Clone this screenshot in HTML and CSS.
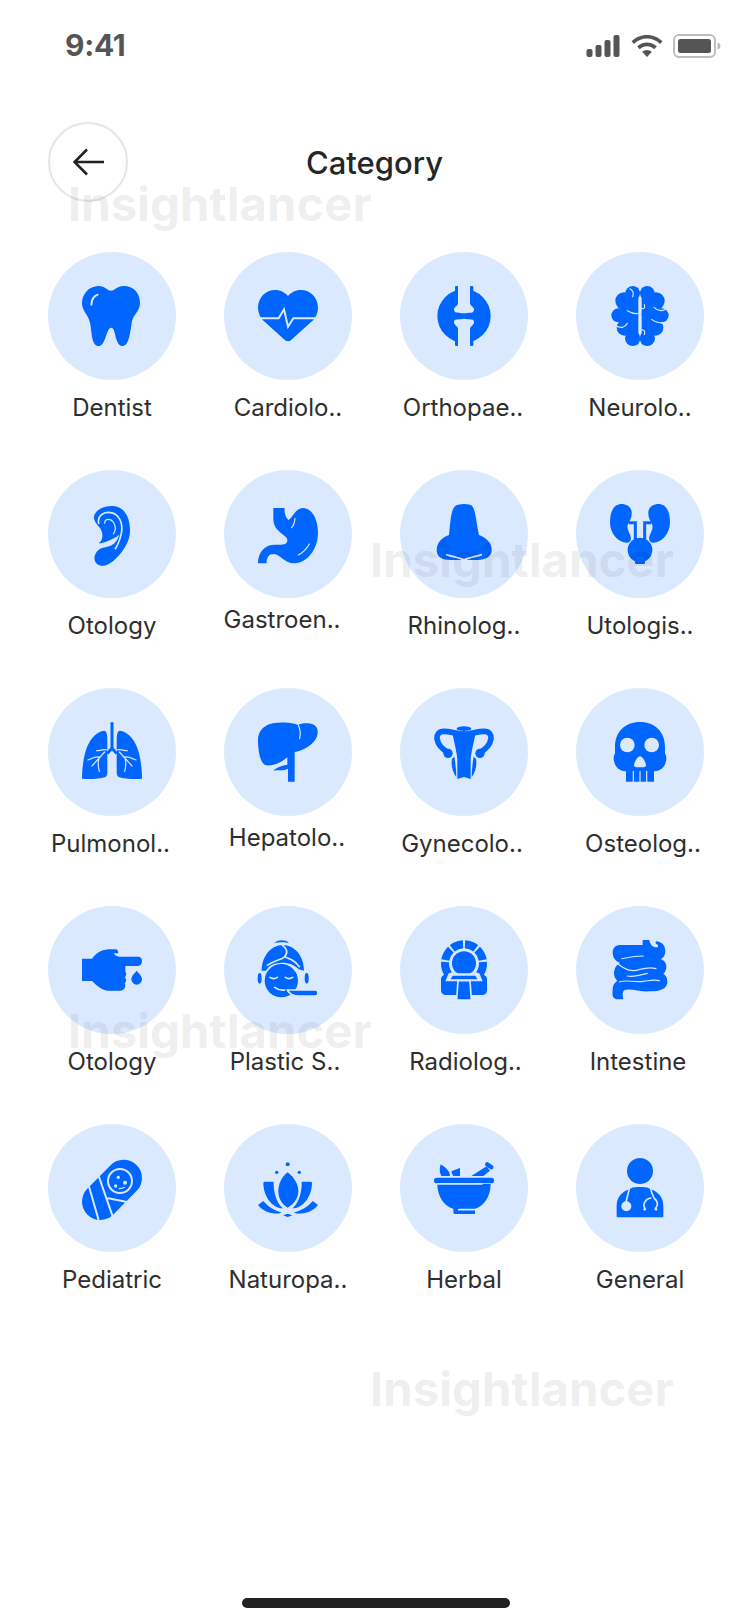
FILE: index.html
```html
<!DOCTYPE html>
<html lang="en">
<head>
<meta charset="utf-8">
<title>Category</title>
<link rel="stylesheet" href="styles.css">
</head>
<body>
<div class="phone">
  <div class="status">
    <span class="time">9:41</span>
    <div class="status-icons">
      <svg class="sig" viewBox="0 0 34 22"><rect x="0" y="14" width="6" height="8" rx="2"/><rect x="9" y="10" width="6" height="12" rx="2"/><rect x="18" y="5" width="6" height="17" rx="2"/><rect x="27" y="0" width="6" height="22" rx="2"/></svg>
      <svg class="wifi" viewBox="0 0 32 22"><path d="M16 0C10 0 4.500 2.300 0.500 6.300L3 9C6.500 5.500 11 3.600 16 3.600S25.500 5.500 29 9L31.500 6.300C27.500 2.300 22 0 16 0Z"/><path d="M16 7.500C12.300 7.500 8.800 9 6.200 11.500L8.800 14.200C10.700 12.300 13.200 11.200 16 11.200S21.300 12.300 23.200 14.200L25.800 11.500C23.200 9 19.700 7.500 16 7.500Z"/><path d="M16 15C14.200 15 12.500 15.700 11.300 16.900L16 22L20.700 16.900C19.500 15.700 17.800 15 16 15Z"/></svg>
      <svg class="batt" viewBox="0 0 48 24"><rect class="batt-out" x="1" y="1" width="41" height="22" rx="5"/><rect x="5" y="5" width="33" height="14" rx="2.500"/><path class="batt-nub" d="M44.500 8.500C46.500 9 47.500 10.500 47.500 12S46.500 15 44.500 15.500Z"/></svg>
    </div>
  </div>

  <header class="head">
    <button class="back" type="button" aria-label="Back">
      <svg viewBox="0 0 32 32"><path d="M31 16H2M14 3.500L1.500 16L14 28.500"/></svg>
    </button>
    <h1 class="title">Category</h1>
  </header>

  <main class="grid">
    <div class="cell"><div class="disc"><svg class="ico" viewBox="0 0 180 180"><path d="M50 0C20 0 0 25 0 52C0 75 18 85 24 110C30 140 28 180 50 180C72 180 72 125 88 125C102 125 98 180 122 180C142 180 145 135 150 105C155 85 174 75 174 50C174 22 155 0 125 0C105 0 98 14 87 14C75 14 70 0 50 0Z"/><path class="lt" d="M47 26C36 30 29 40 28 56"/></svg></div><span class="lbl">Dentist</span></div>

    <div class="cell"><div class="disc"><svg class="ico" viewBox="0 0 180 180"><path d="M52 12C22 12 0 35 0 65C0 80 6 92 14 102L78 160C85 168 95 168 102 160L166 102C174 92 180 80 180 65C180 35 158 12 128 12C112 12 98 20 90 30C82 20 68 12 52 12Z"/><path class="lt" d="M3 97H62L78 70L90 122L106 97H177"/></svg></div><span class="lbl">Cardiolo..</span></div>

    <div class="cell"><div class="disc"><svg class="ico" viewBox="0 0 180 180"><circle cx="90" cy="90" r="80"/><rect x="63" y="0" width="10" height="180" rx="3"/><rect x="108" y="0" width="10" height="180" rx="3"/><path class="lf" d="M72 -2H108V50C108 60 120 62 120 71C120 83 104 79 90 82C76 79 60 83 60 71C60 62 72 60 72 50Z"/><path class="lf" d="M72 182H108V130C108 120 120 118 120 108C120 96 104 102 90 98C76 102 60 96 60 108C60 118 72 120 72 130Z"/></svg></div><span class="lbl lbl-s1">Orthopae..</span></div>

    <div class="cell"><div class="disc"><svg class="ico" viewBox="0 0 180 180"><circle cx="68" cy="22" r="22"/><circle cx="42" cy="45" r="26"/><circle cx="25" cy="88" r="21"/><circle cx="44" cy="125" r="24"/><circle cx="68" cy="157" r="23"/><circle cx="54" cy="85" r="31"/><rect x="58" y="5" width="27" height="170"/><circle cx="112" cy="22" r="22"/><circle cx="138" cy="45" r="26"/><circle cx="155" cy="88" r="21"/><circle cx="136" cy="125" r="24"/><circle cx="112" cy="157" r="23"/><circle cx="126" cy="85" r="31"/><rect x="95" y="5" width="27" height="170"/><path class="lt hair" d="M60 8C70 14 72 22 68 32M16 118C30 128 44 126 52 112M52 74C62 80 72 86 85 82M95 68C103 70 106 62 103 56M168 68C155 78 142 74 132 64M165 112C150 110 135 110 125 100M95 132C103 130 106 138 103 146"/></svg></div><span class="lbl">Neurolo..</span></div>

    <div class="cell"><div class="disc"><svg class="ico" viewBox="0 0 180 180"><path d="M90 6C122 6 144 32 144 80C144 112 125 140 100 165C84 182 60 192 45 180C30 168 38 140 60 132C80 126 100 128 112 92C90 108 65 118 50 118C62 108 66 92 54 72C42 58 34 48 36 36C42 16 65 6 90 6Z"/><path class="lt thin" d="M50 58C46 36 64 22 86 26C112 30 124 58 118 88C114 106 108 122 100 134"/><path class="lt hair" d="M68 58C68 42 88 42 96 58C102 70 100 82 94 90"/></svg></div><span class="lbl">Otology</span></div>

    <div class="cell"><div class="disc"><svg class="ico" viewBox="0 0 180 180"><path d="M46 12H80C78 28 84 42 92 48C105 40 112 12 136 12C165 14 180 50 180 85C180 140 145 178 108 178C80 178 68 152 48 150C32 150 26 160 26 178H0C0 145 20 122 50 122C70 122 88 125 88 108C88 92 46 85 46 45Z"/><path class="lt hair" d="M111 43C110 55 107 64 101 71M154 120C146 134 135 146 121 153"/></svg></div><span class="lbl lbl-up lbl-left">Gastroen..</span></div>

    <div class="cell"><div class="disc"><svg class="ico" viewBox="0 0 180 180"><path d="M72 2C50 5 50 50 45 93C25 100 8 115 8 138C8 160 25 168 50 168H130C155 168 173 158 173 138C173 115 155 100 135 93C125 50 125 5 108 2Q90 -2 72 2Z"/><path class="lt thin" d="M38 152C55 158 75 160 90 168M142 152C125 158 105 160 90 168"/></svg></div><span class="lbl">Rhinolog..</span></div>

    <div class="cell"><div class="disc"><svg class="ico" viewBox="0 0 180 180"><path d="M35 0C10 0 0 25 0 55C0 90 25 116 50 116C62 116 66 105 60 92C54 80 50 70 54 60C60 48 66 40 65 25C65 10 50 0 35 0Z"/><path d="M145 0C170 0 180 25 180 55C180 90 155 116 130 116C118 116 114 105 120 92C126 80 130 70 126 60C120 48 114 40 115 25C115 10 130 0 145 0Z"/><path class="st" d="M56 56H76V112M124 56H104V112"/><circle cx="90" cy="138" r="37"/><rect x="75" y="160" width="30" height="20" rx="3"/></svg></div><span class="lbl">Utologis..</span></div>

    <div class="cell"><div class="disc"><svg class="ico" viewBox="0 0 180 180"><path d="M66 26C40 30 20 55 10 90C2 120 0 150 0 170C20 172 50 172 70 165C76 162 76 155 76 145V60C76 40 75 26 66 26Z"/><path d="M114 26C140 30 160 55 170 90C178 120 180 150 180 170C160 172 130 172 110 165C104 162 104 155 104 145V60C104 40 105 26 114 26Z"/><path class="st" d="M90 1V78L76 95M90 78L104 95"/><path class="lt hair" d="M76 84C66 80 56 86 44 86M68 90L30 132M56 104C42 104 30 108 18 114M52 108C46 118 48 132 52 148"/><path class="lt hair" d="M104 84C114 80 124 86 136 86M112 90L150 132M124 104C138 104 150 108 162 114M128 108C134 118 132 132 128 148"/></svg></div><span class="lbl lbl-shift">Pulmonol..</span></div>

    <div class="cell"><div class="disc"><svg class="ico" viewBox="0 0 180 180"><path d="M0 55C0 18 30 2 62 2C85 0 108 2 120 9C130 2 155 2 167 8C180 14 182 30 176 46C165 68 140 86 110 90V179H90V140C75 148 62 142 46 146C55 136 75 130 88 128V106C70 122 45 132 25 130C8 128 0 90 0 55Z"/><path class="lt hair" d="M121 9C127 22 128 36 125 50"/></svg></div><span class="lbl lbl-up lbl-s1">Hepatolo..</span></div>

    <div class="cell"><div class="disc"><svg class="ico" viewBox="0 0 180 180"><ellipse cx="90" cy="20" rx="22" ry="7"/><g id="ut"><path class="tube" d="M90 36C70 36 50 28 30 28C14 28 8 38 9 50C12 70 28 84 44 92"/><circle cx="42" cy="94" r="14"/><path d="M54 110C50 130 56 150 67 166C67 146 65 126 61 104Z"/><path class="lt hair" d="M30 46C42 46 50 56 50 72"/></g><use href="#ut" transform="matrix(-1 0 0 1 180 0)"/><path d="M56 38H124C118 66 111 94 110 112V171L90 165L70 171V112C69 94 62 66 56 38Z"/></svg></div><span class="lbl lbl-s2">Gynecolo..</span></div>

    <div class="cell"><div class="disc"><svg class="ico" viewBox="0 0 180 180"><path d="M90 0C45 0 15 30 15 75V95C5 105 12 148 48 148V179H132V148C168 148 175 105 165 95V75C165 30 135 0 90 0Z"/><circle class="lf" cx="52" cy="69" r="22"/><circle class="lf" cx="125" cy="69" r="22"/><path class="lf" d="M90 103C98 103 108 122 108 130C108 136 102 136 90 136C78 136 72 136 72 130C72 122 82 103 90 103Z"/><path class="lt hair" d="M70 148V180M90 148V180M110 148V180"/></svg></div><span class="lbl lbl-right">Osteolog..</span></div>

    <div class="cell"><div class="disc"><svg class="ico" viewBox="0 0 180 180"><path d="M0 56H30C45 35 65 28 85 28H100C108 28 110 36 108 40H95C100 48 108 50 115 50H168C178 50 180 58 180 64C180 72 175 78 168 78H130V95C135 100 132 110 128 112C135 118 132 128 128 130C133 138 128 152 115 152H80C60 152 42 135 30 123H0Z"/><path d="M164 92C172 102 180 108 180 118A16 16 0 0 1 148 118C148 108 156 102 164 92Z"/></svg></div><span class="lbl">Otology</span></div>

    <div class="cell"><div class="disc"><svg class="ico" viewBox="0 0 180 180"><path d="M50 10C55 -2 88 -2 93 10C82 6 62 6 50 10Z"/><path d="M74 15C112 15 138 50 138 92L122 88C110 74 92 68 72 68C50 68 32 76 24 92L11 92C11 50 38 15 74 15Z"/><ellipse cx="5" cy="115" rx="6" ry="16"/><ellipse cx="146" cy="115" rx="6" ry="16"/><circle cx="70" cy="122" r="50"/><path class="tray" d="M88 150H172C177 150 180 154 180 159C180 165 177 168 172 168H120C108 168 96 165 88 150Z"/><path class="lt thin" d="M72 14C86 26 92 36 80 50C74 58 50 60 28 76M80 50C96 56 112 62 124 80"/><path class="lt thin" d="M36 112C42 116 52 116 58 112M82 112C88 116 98 116 104 112M50 142C58 148 68 152 80 150"/></svg></div><span class="lbl lbl-s3">Plastic S..</span></div>

    <div class="cell"><div class="disc"><svg class="ico" viewBox="0 0 180 180"><path class="ring" d="M93 13.100A57 57 0 0 1 125.100 25.100M129.600 29A57 57 0 0 1 146.100 60.100M146.900 66A57 57 0 0 1 136.700 102.700M87 13.100A57 57 0 0 0 54.900 25.100M50.400 29A57 57 0 0 0 33.900 60.100M33.100 66A57 57 0 0 0 43.300 102.700"/><circle cx="90" cy="70" r="36"/><rect x="21" y="104" width="138" height="61" rx="14"/><path class="lf" d="M44 100H136L146 124H34Z"/><path d="M56 107H124L130 118H50Z"/><path class="tray" d="M72 122H108L112 180H68Z"/></svg></div><span class="lbl lbl-r">Radiolog..</span></div>

    <div class="cell"><div class="disc"><svg class="ico" viewBox="0 0 180 180"><path d="M32 15H98V0H118C120 14 128 22 140 22C146 22 146 14 138 12C136 8 136 4 140 4C156 6 166 16 166 34C166 46 160 54 152 58C166 62 172 74 168 88C166 94 164 98 160 102C172 108 172 122 172 128C170 146 150 154 120 154C90 156 62 144 44 150C36 154 38 168 40 178H24C8 178 6 166 8 150C8 136 12 130 22 122C12 114 10 100 14 88C16 80 22 74 30 68C14 62 8 50 8 38C8 22 18 15 32 15Z"/><path class="lt hair" d="M36 56C56 52 72 48 100 48M24 72C50 92 66 96 90 88C105 84 120 80 138 86M52 108C72 112 90 106 112 100M28 126C50 118 70 128 100 124C118 122 130 118 148 122"/></svg></div><span class="lbl lbl-s2">Intestine</span></div>

    <div class="cell"><div class="disc"><svg class="ico" viewBox="0 0 180 180"><path class="swad" d="M55 131L125 60"/><path class="lt" d="M19 79L49 183M49 51L94 181M79 121L139 133M92 181L134 134"/><circle class="ring-head" cx="114" cy="69" r="36"/><circle class="lf" cx="109" cy="58" r="5"/><circle class="lf" cx="129" cy="74" r="6"/><circle class="lf" cx="101" cy="84" r="5"/><path class="lt hair" d="M112 92C120 92 124 90 128 88"/></svg></div><span class="lbl">Pediatric</span></div>

    <div class="cell"><div class="disc"><svg class="ico" viewBox="0 0 180 180"><circle cx="89" cy="19" r="6"/><circle cx="56" cy="43" r="5"/><circle cx="124" cy="43" r="5"/><path d="M89 43C108 58 121 78 121 100C121 122 106 140 89 149C72 140 61 122 61 100C61 78 70 58 89 43Z"/><path d="M20 71H47C46 95 52 130 74 151C40 150 16 112 16 75C16 73 18 71 20 71Z"/><path d="M158 71H131C132 95 126 130 104 151C138 150 162 112 162 75C162 73 160 71 158 71Z"/><path d="M0 141L16 129C30 146 50 158 71 164C40 172 15 160 0 141Z"/><path d="M180 141L164 129C150 146 130 158 107 164C140 172 165 160 180 141Z"/><path d="M89 167L103 172L89 177L75 172Z"/></svg></div><span class="lbl">Naturopa..</span></div>

    <div class="cell"><div class="disc"><svg class="ico" viewBox="0 0 180 180"><path d="M20 19C35 28 48 40 48 54H22C16 45 16 30 20 19Z"/><path d="M52 40L78 30V54H58C55 50 53 45 52 40Z"/><path d="M112 54L158 25L168 38L148 54Z"/><rect x="152" y="17" width="28" height="13" rx="6" transform="rotate(35 166 23)"/><rect x="0" y="59" width="180" height="17" rx="8"/><path d="M10 78H170C170 115 150 145 123 152V168H62C58 168 58 162 58 152C30 145 10 115 10 78Z"/><path class="lt thin" d="M12 78H144M74 155H122"/></svg></div><span class="lbl">Herbal</span></div>

    <div class="cell"><div class="disc"><svg class="ico" viewBox="0 0 180 180"><circle cx="90" cy="39" r="39"/><path d="M20 178V145C20 118 34 104 52 96L65 90C70 86 110 86 115 90L128 96C146 104 160 118 160 145V178Z"/><path class="lt thin" d="M58 92L48 132M122 92C124 102 128 112 132 120C144 130 146 142 136 152M105 152C96 138 108 122 122 120"/><circle class="lf" cx="49" cy="145" r="15"/><circle class="lf" cx="104" cy="154" r="4"/><circle class="lf" cx="138" cy="154" r="4"/></svg></div><span class="lbl">General</span></div>
  </main>

  <div class="home"></div>

  <span class="mark mark-a">Insightlancer</span>
  <span class="mark mark-b">Insightlancer</span>
  <span class="mark mark-c">Insightlancer</span>
  <span class="mark mark-d">Insightlancer</span>
</div>
</body>
</html>
```

FILE: styles.css
```css
* { box-sizing: border-box; }
html, body { margin: 0; padding: 0; background: #fff; }
body { font-family: Inter, "Noto Sans", sans-serif; }

.phone {
  position: relative;
  width: 750px;
  height: 1624px;
  overflow: hidden;
  background: #fff;
  display: flex;
  flex-direction: column;
}

.status {
  height: 122px;
  padding: 26px 29px 0 65px;
  display: flex;
  justify-content: space-between;
  align-items: flex-start;
}
.time {
  font-size: 30px;
  font-weight: 700;
  letter-spacing: -0.3px;
  line-height: 38px;
  color: #555;
}
.status-icons { display: flex; align-items: flex-start; gap: 10px; padding-top: 8px; }
.status-icons svg { display: block; fill: #555; }
.sig { width: 35px; height: 22px; margin-top: 1px; }
.wifi { width: 32px; height: 22px; margin-top: 1px; }
.batt { width: 48px; height: 24px; }
.batt-out { fill: none; stroke: #bdbdbd; stroke-width: 2; }
.batt-nub { fill: #bdbdbd; }

.head {
  height: 80px;
  margin: 0 46px 50px 48px;
  display: flex;
  align-items: center;
}
.back {
  width: 80px;
  height: 80px;
  padding: 0 0 0 1px;
  border: 2px solid #e6e6e6;
  border-radius: 50%;
  background: transparent;
  display: flex;
  align-items: center;
  justify-content: center;
  flex: none;
}
.back svg { width: 32px; height: 32px; fill: none; stroke: #222; stroke-width: 2.600; }
.title {
  margin: 2px 0 0 178px;
  font-size: 31px;
  font-weight: 500;
  line-height: 40px;
  color: #262626;
}

.grid {
  display: grid;
  grid-template-columns: repeat(4, 128px);
  column-gap: 48px;
  grid-auto-rows: 218px;
  padding-left: 48px;
}
.cell { display: flex; flex-direction: column; align-items: center; }
.disc {
  width: 128px;
  height: 128px;
  flex: none;
  border-radius: 50%;
  background: #dbe9ff;
  display: flex;
  align-items: center;
  justify-content: center;
}
.ico { width: 60px; height: 60px; overflow: visible; fill: #0066ff; }
.lf { fill: #dbe9ff; }
.lt { fill: none; stroke: #dbe9ff; stroke-width: 6; stroke-linecap: round; }
.lt.thin { stroke-width: 5; }
.lt.hair { stroke-width: 3.500; }
.st { fill: none; stroke: #0066ff; stroke-width: 9; }
.tube { fill: none; stroke: #0066ff; stroke-width: 17; stroke-linecap: round; }
.ring { fill: none; stroke: #0066ff; stroke-width: 24; }
.tray { stroke: #dbe9ff; stroke-width: 5; }
.swad { fill: none; stroke: #0066ff; stroke-width: 110; stroke-linecap: round; }
.ring-head { fill: #0066ff; stroke: #dbe9ff; stroke-width: 6; }

.lbl {
  margin-top: 13px;
  font-size: 24px;
  line-height: 30px;
  color: #2e2e2e;
  white-space: nowrap;
}
.lbl-up { margin-top: 7px; }
.lbl-left { margin-right: 12px; }
.lbl-right { margin-left: 6px; }
.lbl-shift { margin-right: 3px; }
.lbl-s1 { margin-right: 2px; }
.lbl-s2 { margin-right: 4px; }
.lbl-s3 { margin-right: 6px; }
.lbl-r { margin-left: 3px; }

.home {
  width: 268px;
  height: 10px;
  margin: auto 0 16px 242px;
  border-radius: 5px;
  background: #222;
}

.mark {
  position: absolute;
  font-size: 47.300px;
  font-weight: 700;
  line-height: 58px;
  color: rgba(0, 0, 0, 0.085);
  white-space: nowrap;
}
.mark-a { left: 68px; top: 175px; }
.mark-b { left: 370px; top: 531px; }
.mark-c { left: 68px; top: 1002px; }
.mark-d { left: 370px; top: 1360px; }
```
